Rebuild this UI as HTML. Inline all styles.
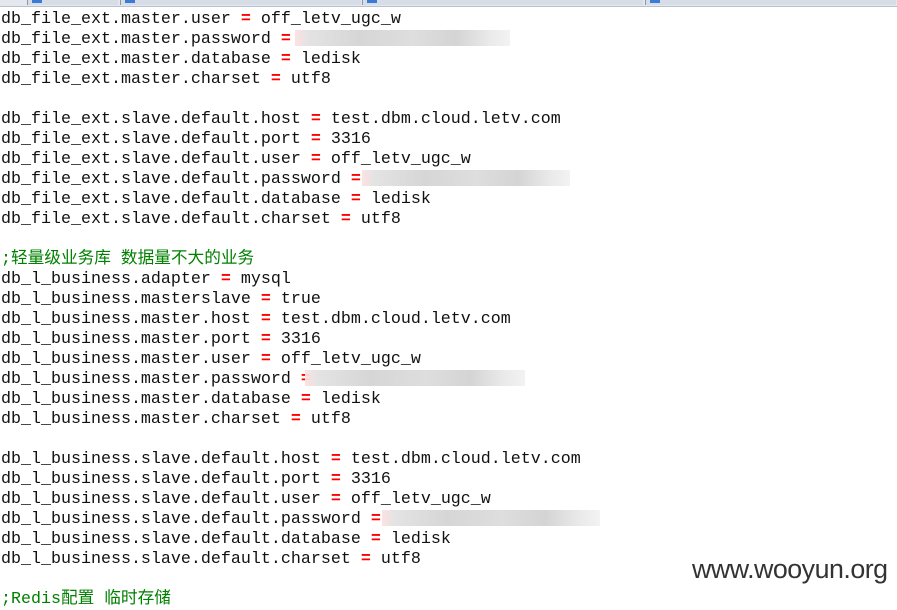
<!DOCTYPE html><html><head><meta charset="utf-8"><style>
body{margin:0;width:897px;height:599px;overflow:hidden;background:#fff;position:relative}
.top{position:absolute;left:0;top:0;width:897px;height:6px;background:#e4e8ee;border-bottom:1px solid #b8c0cc}
.tab{position:absolute;top:0;height:5px;border-left:1px solid #8a96a8;background:#d6dde6}
.tab i{position:absolute;left:4px;top:0;width:10px;height:3px;background:#3a7bd5}
pre{position:absolute;left:1px;top:10px;margin:0;font-family:"Liberation Mono","Noto Sans CJK SC",monospace;font-size:16.67px;line-height:20px;color:#111}
b{color:#f00}
.c{color:#008000}
.bl{position:absolute;height:16px;background:linear-gradient(90deg,#fde0e0 0,#e2e2e2 6%,#d4d4d4 30%,#dcdcdc 55%,#d2d2d2 75%,#e8e8e8 90%,#f2f2f2 100%);opacity:.95}
.wm{position:absolute;left:692px;top:554px;font-family:"Liberation Sans",sans-serif;font-size:26.8px;color:#333;letter-spacing:-0.5px}
</style></head><body>
<div class="top">
<div class="tab" style="left:27px;width:90px"><i></i></div>
<div class="tab" style="left:120px;width:240px"><i></i></div>
<div class="tab" style="left:362px;width:280px"><i></i></div>
<div class="tab" style="left:645px;width:250px"><i></i></div>
</div>
<pre>db_file_ext.master.user <b>=</b> off_letv_ugc_w
db_file_ext.master.password <b>=</b>
db_file_ext.master.database <b>=</b> ledisk
db_file_ext.master.charset <b>=</b> utf8

db_file_ext.slave.default.host <b>=</b> test.dbm.cloud.letv.com
db_file_ext.slave.default.port <b>=</b> 3316
db_file_ext.slave.default.user <b>=</b> off_letv_ugc_w
db_file_ext.slave.default.password <b>=</b>
db_file_ext.slave.default.database <b>=</b> ledisk
db_file_ext.slave.default.charset <b>=</b> utf8

<span class="c">;轻量级业务库 数据量不大的业务</span>
db_l_business.adapter <b>=</b> mysql
db_l_business.masterslave <b>=</b> true
db_l_business.master.host <b>=</b> test.dbm.cloud.letv.com
db_l_business.master.port <b>=</b> 3316
db_l_business.master.user <b>=</b> off_letv_ugc_w
db_l_business.master.password <b>=</b>
db_l_business.master.database <b>=</b> ledisk
db_l_business.master.charset <b>=</b> utf8

db_l_business.slave.default.host <b>=</b> test.dbm.cloud.letv.com
db_l_business.slave.default.port <b>=</b> 3316
db_l_business.slave.default.user <b>=</b> off_letv_ugc_w
db_l_business.slave.default.password <b>=</b>
db_l_business.slave.default.database <b>=</b> ledisk
db_l_business.slave.default.charset <b>=</b> utf8

<span class="c">;Redis配置 临时存储</span></pre>
<div class="bl" style="left:295px;top:30px;width:215px"></div>
<div class="bl" style="left:362px;top:170px;width:208px"></div>
<div class="bl" style="left:305px;top:370px;width:220px"></div>
<div class="bl" style="left:382px;top:510px;width:218px"></div>
<div class="wm">www.wooyun.org</div>
</body></html>
